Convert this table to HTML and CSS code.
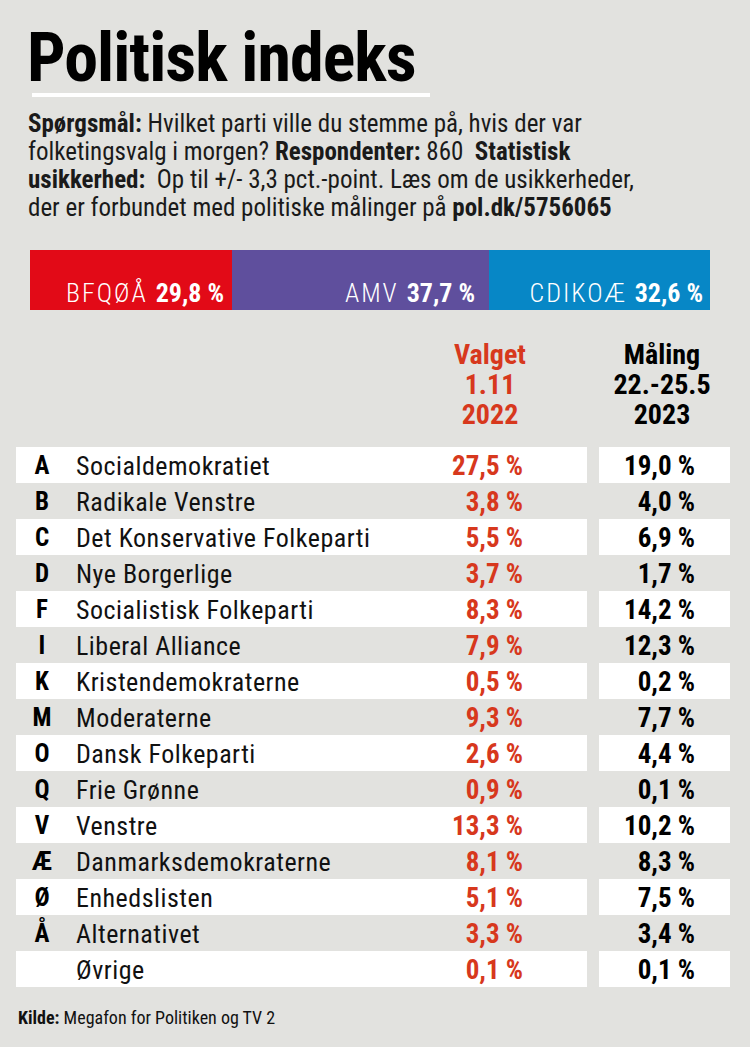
FILE: index.html
```html
<!DOCTYPE html>
<html lang="da">
<head>
<meta charset="utf-8">
<title>Politisk indeks</title>
<link rel="stylesheet" href="styles.css">
</head>
<body>
<div class="card">
  <h1 class="title">Politisk indeks</h1>
  <div class="rule"></div>
  <p class="intro"><b>Spørgsmål:</b> Hvilket parti ville du stemme på, hvis der var<br>folketingsvalg i morgen? <b>Respondenter:</b> 860&nbsp; <b>Statistisk</b><br><b>usikkerhed:</b>&nbsp; Op til +/- 3,3 pct.-point. Læs om de usikkerheder,<br>der er forbundet med politiske målinger på <b>pol.dk/5756065</b></p>

  <div class="bar">
    <div class="seg red" style="width:202px"><span class="lab">BFQØÅ</span>&nbsp;<b>29,8&nbsp;%</b></div>
    <div class="seg purple" style="width:257px"><span class="lab">AMV</span>&nbsp;<b>37,7&nbsp;%</b></div>
    <div class="seg blue" style="width:221px"><span class="lab">CDIKOÆ</span>&nbsp;<b>32,6&nbsp;%</b></div>
  </div>

  <div class="table">
    <div class="head">
      <div class="h-valg">Valget<br>1.11<br>2022</div>
      <div class="h-mal">Måling<br>22.-25.5<br>2023</div>
    </div>
    <div class="row w"><div class="main"><span class="ltr">A</span><span class="name">Socialdemokratiet</span><span class="v1">27,5&nbsp;%</span></div><div class="v2">19,0&nbsp;%</div></div>
    <div class="row"><div class="main"><span class="ltr">B</span><span class="name">Radikale Venstre</span><span class="v1">3,8&nbsp;%</span></div><div class="v2">4,0&nbsp;%</div></div>
    <div class="row w"><div class="main"><span class="ltr">C</span><span class="name">Det Konservative Folkeparti</span><span class="v1">5,5&nbsp;%</span></div><div class="v2">6,9&nbsp;%</div></div>
    <div class="row"><div class="main"><span class="ltr">D</span><span class="name">Nye Borgerlige</span><span class="v1">3,7&nbsp;%</span></div><div class="v2">1,7&nbsp;%</div></div>
    <div class="row w"><div class="main"><span class="ltr">F</span><span class="name">Socialistisk Folkeparti</span><span class="v1">8,3&nbsp;%</span></div><div class="v2">14,2&nbsp;%</div></div>
    <div class="row"><div class="main"><span class="ltr">I</span><span class="name">Liberal Alliance</span><span class="v1">7,9&nbsp;%</span></div><div class="v2">12,3&nbsp;%</div></div>
    <div class="row w"><div class="main"><span class="ltr">K</span><span class="name">Kristendemokraterne</span><span class="v1">0,5&nbsp;%</span></div><div class="v2">0,2&nbsp;%</div></div>
    <div class="row"><div class="main"><span class="ltr">M</span><span class="name">Moderaterne</span><span class="v1">9,3&nbsp;%</span></div><div class="v2">7,7&nbsp;%</div></div>
    <div class="row w"><div class="main"><span class="ltr">O</span><span class="name">Dansk Folkeparti</span><span class="v1">2,6&nbsp;%</span></div><div class="v2">4,4&nbsp;%</div></div>
    <div class="row"><div class="main"><span class="ltr">Q</span><span class="name">Frie Grønne</span><span class="v1">0,9&nbsp;%</span></div><div class="v2">0,1&nbsp;%</div></div>
    <div class="row w"><div class="main"><span class="ltr">V</span><span class="name">Venstre</span><span class="v1">13,3&nbsp;%</span></div><div class="v2">10,2&nbsp;%</div></div>
    <div class="row"><div class="main"><span class="ltr">Æ</span><span class="name">Danmarksdemokraterne</span><span class="v1">8,1&nbsp;%</span></div><div class="v2">8,3&nbsp;%</div></div>
    <div class="row w"><div class="main"><span class="ltr">Ø</span><span class="name">Enhedslisten</span><span class="v1">5,1&nbsp;%</span></div><div class="v2">7,5&nbsp;%</div></div>
    <div class="row"><div class="main"><span class="ltr">Å</span><span class="name">Alternativet</span><span class="v1">3,3&nbsp;%</span></div><div class="v2">3,4&nbsp;%</div></div>
    <div class="row w"><div class="main"><span class="ltr"></span><span class="name">Øvrige</span><span class="v1">0,1&nbsp;%</span></div><div class="v2">0,1&nbsp;%</div></div>
  </div>

  <p class="source"><b>Kilde:</b> Megafon for Politiken og TV 2</p>
</div>
</body>
</html>
```

FILE: styles.css
```css
* { box-sizing: border-box; }
html, body { margin: 0; padding: 0; }
body {
  width: 750px;
  height: 1047px;
  background: #e2e2df;
  font-family: "Roboto Condensed", "Roboto", sans-serif;
  font-stretch: condensed;
  color: #111;
  overflow: hidden;
}
.card {
  width: 750px;
  height: 1047px;
  padding-top: 23px;
  display: flex;
  flex-direction: column;
}
.title {
  margin: 0 0 0 27px;
  font-size: 68px;
  line-height: 70px;
  font-weight: 700;
  letter-spacing: -1px;
  color: #000;
}
.rule {
  margin: 0 0 0 32px;
  width: 398px;
  height: 4px;
  background: #fff;
}
.intro {
  margin: 13px 0 0 28px;
  font-size: 25px;
  line-height: 28px;
  color: #1a1a1a;
  white-space: nowrap;
}
.intro b { font-weight: 700; }
.bar {
  margin: 28px 0 0 30px;
  display: flex;
  height: 60px;
}
.seg {
  height: 60px;
  display: flex;
  align-items: flex-end;
  justify-content: flex-end;
  padding: 0 8px 3px 0;
  color: #fff;
  font-size: 26px;
  line-height: 28px;
  white-space: nowrap;
}
.seg .lab { font-weight: 300; letter-spacing: 2px; margin-right: 2px; }
.seg b { font-weight: 700; }
.red { background: #e20a17; }
.purple { background: #5f4f9d; padding-right: 14px; }
.blue { background: #0787c6; padding-right: 7px; }

.table { margin-top: 30px; display: flex; flex-direction: column; }
.head {
  display: flex;
  height: 107px;
  font-size: 28px;
  line-height: 30px;
  font-weight: 700;
  text-align: center;
}
.h-valg { color: #d7381d; width: 160px; margin-left: 410px; }
.h-mal { color: #000; width: 160px; margin-left: 12px; }

.row {
  display: flex;
  height: 36px;
}
.main {
  margin-left: 16px;
  width: 571px;
  display: flex;
  padding-top: 2px;
  line-height: 34px;
}
.v2 {
  margin-left: 12px;
  width: 131px;
  text-align: right;
  padding: 2px 35px 0 0;
  line-height: 34px;
  font-weight: 700;
  font-size: 27px;
  color: #000;
}
.row.w .main, .row.w .v2 { background: #fff; }
.ltr {
  width: 52px;
  text-align: center;
  font-weight: 700;
  font-size: 25px;
  color: #000;
}
.name {
  margin-left: 8px;
  flex: 1;
  font-size: 26px;
  letter-spacing: 0.5px;
  color: #111;
}
.v1 {
  width: 180px;
  text-align: right;
  padding-right: 64px;
  font-weight: 700;
  font-size: 27px;
  color: #d7381d;
}
.source {
  margin: 20px 0 0 18px;
  font-size: 18px;
  line-height: 22px;
  color: #111;
}
```
